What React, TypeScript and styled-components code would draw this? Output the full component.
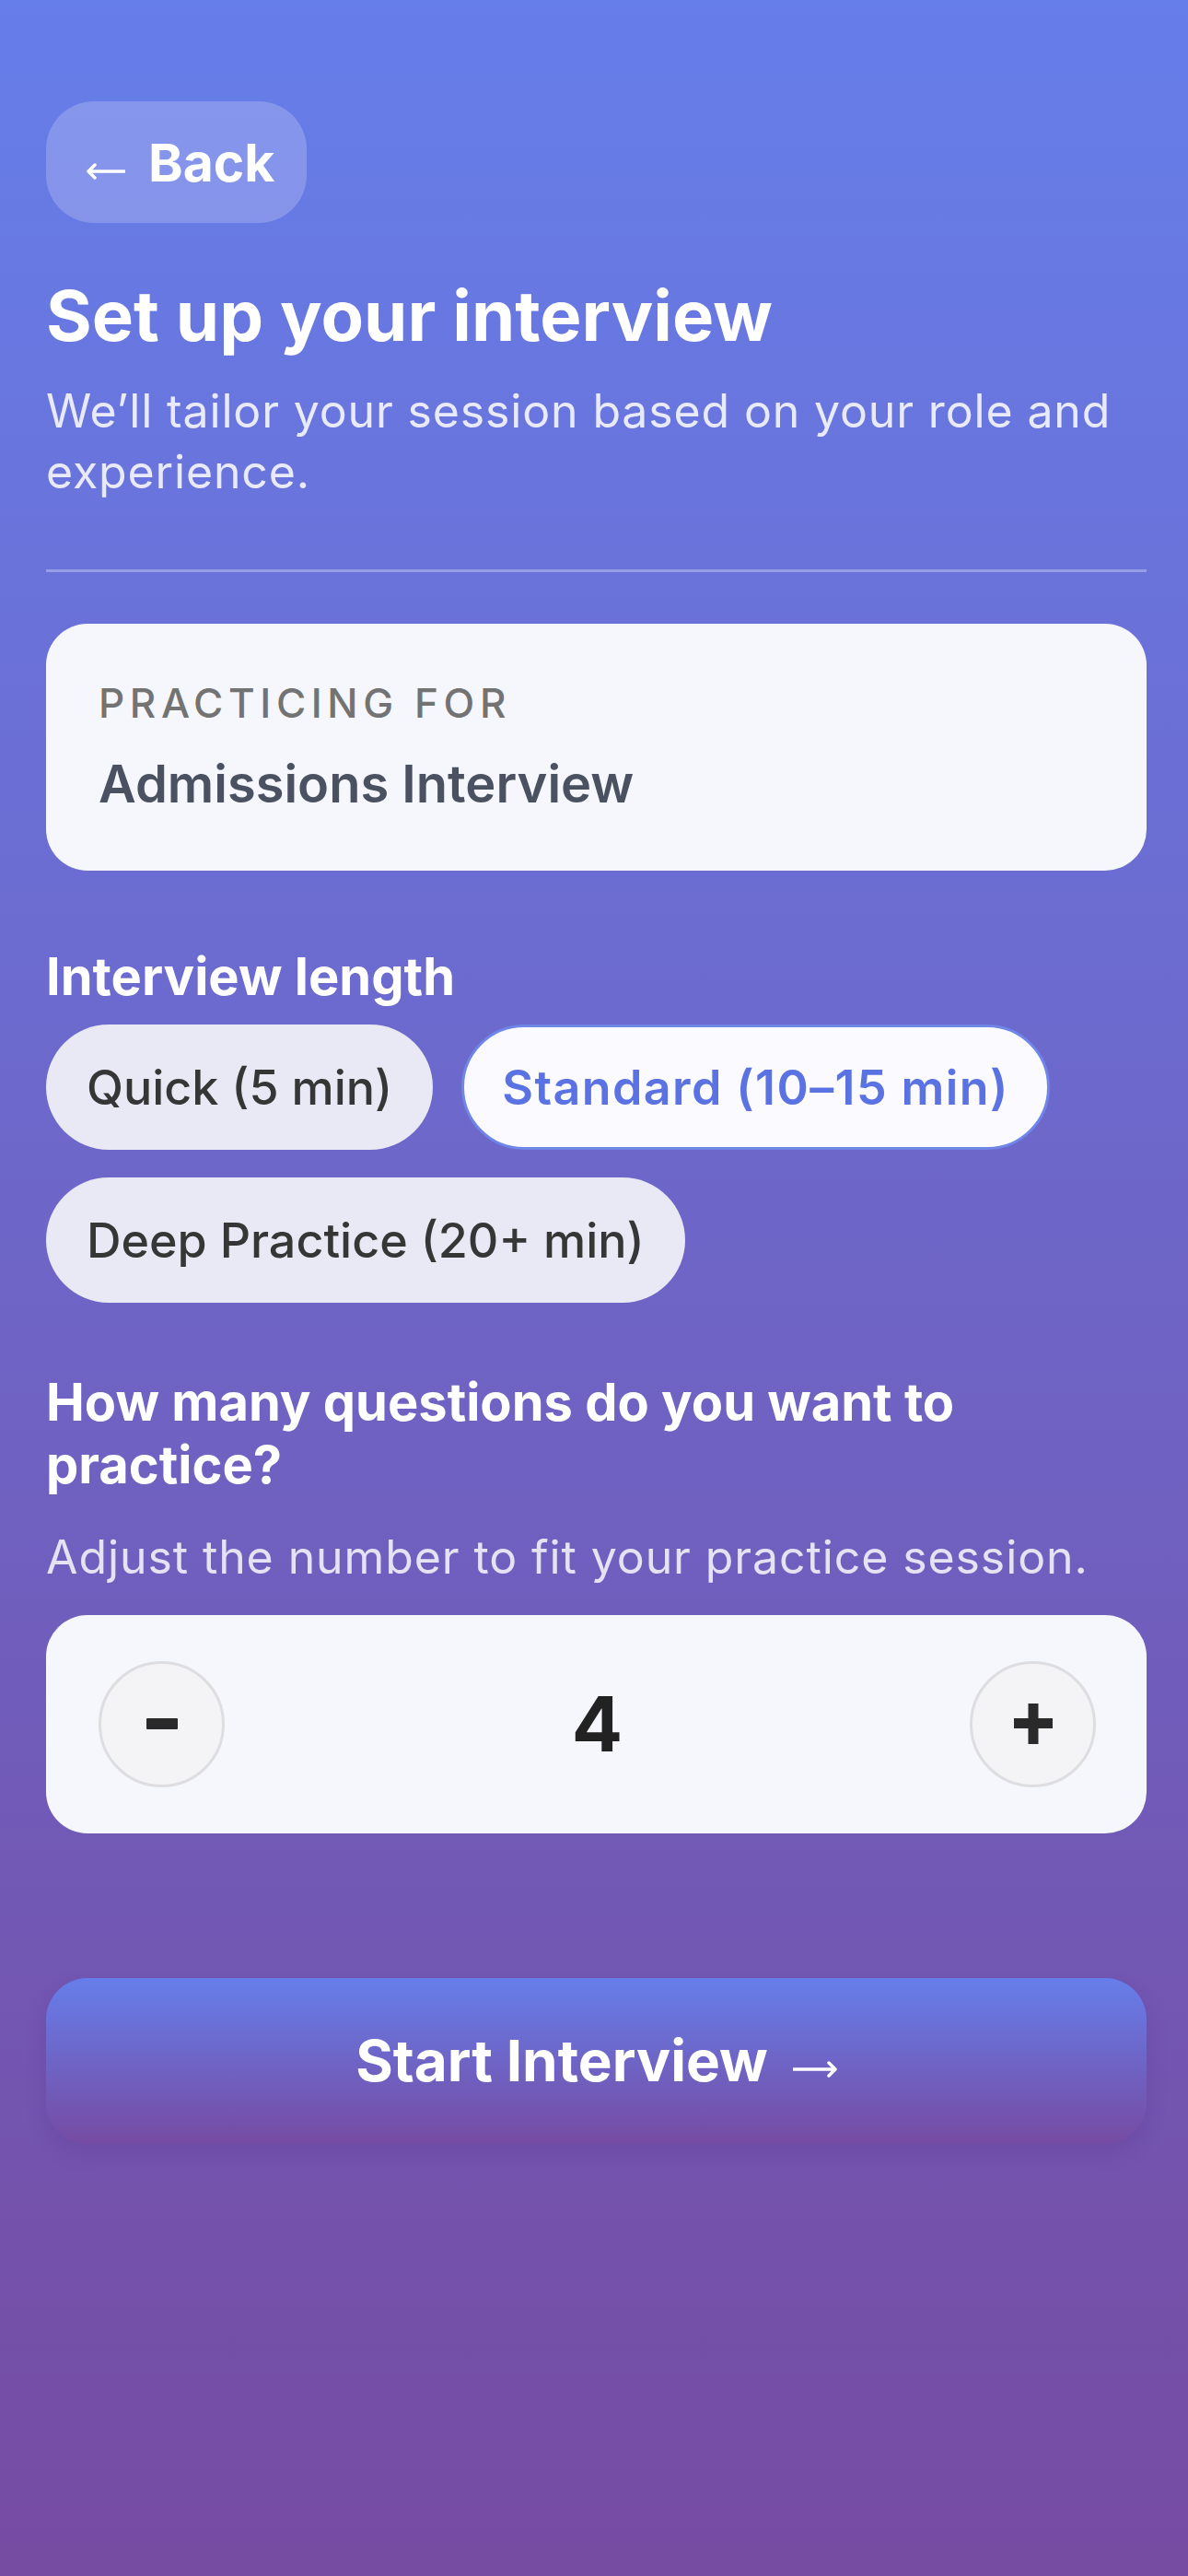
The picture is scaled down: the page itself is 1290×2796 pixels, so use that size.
import React, { useState } from 'react';
import styled, { createGlobalStyle, css } from 'styled-components';

const GlobalStyle = createGlobalStyle`
    html, body {
        margin: 0;
        padding: 0;
    }
    body {
        font-family: Inter, Roboto, 'Noto Sans', 'Liberation Sans', sans-serif;
        -webkit-font-smoothing: antialiased;
    }
    * {
        box-sizing: border-box;
    }
`;

const Screen = styled.div`
    min-height: 2796px;
    background: linear-gradient(180deg, #667eea 0%, #764ba2 100%);
    padding: 110px 45px 120px 50px;
    display: flex;
    flex-direction: column;
    color: #fff;
`;

const BackButton = styled.button`
    align-self: flex-start;
    height: 132px;
    padding: 0 35px 0 44px;
    border: none;
    border-radius: 52px;
    background: rgba(255, 255, 255, 0.2);
    color: #fff;
    font-family: inherit;
    font-size: 57px;
    font-weight: 700;
    display: flex;
    align-items: center;
    gap: 25px;

    svg {
        position: relative;
        top: 10px;
    }
`;

const Title = styled.h1`
    margin: 55px 0 0;
    font-size: 76px;
    line-height: 1.2;
    font-weight: 700;
`;

const Subtitle = styled.p`
    margin: 25px 0 0;
    font-size: 50px;
    line-height: 66px;
    letter-spacing: 0.85px;
    color: rgba(255, 255, 255, 0.85);
`;

const Divider = styled.hr`
    margin: 73px 0 0;
    border: none;
    height: 3px;
    background: rgba(255, 255, 255, 0.3);
`;

const Card = styled.div`
    background: #f6f7fc;
    border-radius: 45px;
`;

const InfoCard = styled(Card)`
    margin-top: 56px;
    padding: 60px 57px;
`;

const CardLabel = styled.div`
    font-size: 44px;
    line-height: 1.2;
    font-weight: 500;
    letter-spacing: 5.6px;
    text-transform: uppercase;
    color: #737373;
`;

const CardValue = styled.div`
    margin-top: 28px;
    font-size: 56px;
    line-height: 1.2;
    font-weight: 600;
    color: #4a5261;
`;

const SectionTitle = styled.h2<{ $top: number }>`
    margin: ${(p) => p.$top}px 0 0;
    font-size: 56px;
    line-height: 1.2;
    font-weight: 700;
    color: #fff;
`;

const Hint = styled.p`
    margin: 35px 0 0;
    font-size: 50px;
    line-height: 62px;
    letter-spacing: 0.9px;
    color: rgba(255, 255, 255, 0.82);
`;

const ChipGroup = styled.div`
    margin-top: 18px;
    display: flex;
    flex-wrap: wrap;
    gap: 30px 31px;
`;

const Chip = styled.button<{ $active?: boolean }>`
    height: 136px;
    padding: 0 41px;
    border-radius: 68px;
    border: 3px solid transparent;
    background: #e9e8f5;
    color: #363636;
    font-family: inherit;
    font-size: 52px;
    font-weight: 500;
    ${(p) =>
        p.$active &&
        css`
            background: #fbfbff;
            border-color: #7085e8;
            color: #5b72e2;
            font-weight: 600;
            letter-spacing: 1.4px;
        `}
`;

const Stepper = styled(Card)`
    margin-top: 32px;
    padding: 50px 55px 50px 57px;
    display: flex;
    align-items: center;
    justify-content: space-between;
`;

const RoundButton = styled.button`
    width: 137px;
    height: 137px;
    border-radius: 50%;
    border: 3px solid #dedee2;
    background: #f4f4f6;
    color: #222;
    display: flex;
    align-items: center;
    justify-content: center;
    padding: 0;
`;

const Count = styled.div`
    font-size: 82px;
    font-weight: 700;
    color: #222;
`;

const StartButton = styled.button`
    margin-top: 157px;
    height: 180px;
    border: none;
    border-radius: 45px;
    background: linear-gradient(180deg, #667eea 0%, #764ba2 100%);
    box-shadow: 0 10px 22px rgba(70, 40, 120, 0.18);
    color: #fff;
    font-family: inherit;
    font-size: 62px;
    font-weight: 700;
    display: flex;
    align-items: center;
    justify-content: center;
    gap: 27px;

    svg {
        position: relative;
        top: 9px;
    }
`;

const ArrowIcon = ({ dir, width, stroke }: { dir: 'left' | 'right'; width: number; stroke: number }) => {
    const h = 18;
    const mid = h / 2;
    const pts =
        dir === 'left'
            ? `M${width - 1} ${mid} H2 M9 ${mid - 7} L2 ${mid} L9 ${mid + 7}`
            : `M1 ${mid} H${width - 2} M${width - 9} ${mid - 7} L${width - 2} ${mid} L${width - 9} ${mid + 7}`;
    return (
        <svg width={width} height={h} viewBox={`0 0 ${width} ${h}`} fill="none">
            <path d={pts} stroke="#fff" strokeWidth={stroke} strokeLinecap="round" strokeLinejoin="round" />
        </svg>
    );
};

const lengths = ['Quick (5 min)', 'Standard (10–15 min)', 'Deep Practice (20+ min)'];

export default function App() {
    const [length, setLength] = useState(1);
    const [count, setCount] = useState(4);

    return (
        <>
            <GlobalStyle />
            <Screen>
                <BackButton>
                    <ArrowIcon dir="left" width={42} stroke={3.5} />
                    Back
                </BackButton>
                <Title>Set up your interview</Title>
                <Subtitle>We’ll tailor your session based on your role and experience.</Subtitle>
                <Divider />

                <InfoCard>
                    <CardLabel>Practicing for</CardLabel>
                    <CardValue>Admissions Interview</CardValue>
                </InfoCard>

                <SectionTitle $top={82}>Interview length</SectionTitle>
                <ChipGroup>
                    {lengths.map((l, i) => (
                        <Chip key={l} $active={i === length} onClick={() => setLength(i)}>
                            {l}
                        </Chip>
                    ))}
                </ChipGroup>

                <SectionTitle $top={75}>How many questions do you want to practice?</SectionTitle>
                <Hint>Adjust the number to fit your practice session.</Hint>
                <Stepper>
                    <RoundButton onClick={() => setCount((c) => Math.max(1, c - 1))}>
                        <svg width="34" height="12" viewBox="0 0 34 12">
                            <rect width="34" height="12" rx="1" fill="#2a2a2a" />
                        </svg>
                    </RoundButton>
                    <Count>{count}</Count>
                    <RoundButton onClick={() => setCount((c) => c + 1)}>
                        <svg width="42" height="44" viewBox="0 0 42 44">
                            <rect x="0" y="16" width="42" height="11" fill="#2a2a2a" />
                            <rect x="15.5" y="0" width="11" height="44" fill="#2a2a2a" />
                        </svg>
                    </RoundButton>
                </Stepper>

                <StartButton>
                    Start Interview
                    <ArrowIcon dir="right" width={48} stroke={3.5} />
                </StartButton>
            </Screen>
        </>
    );
}
